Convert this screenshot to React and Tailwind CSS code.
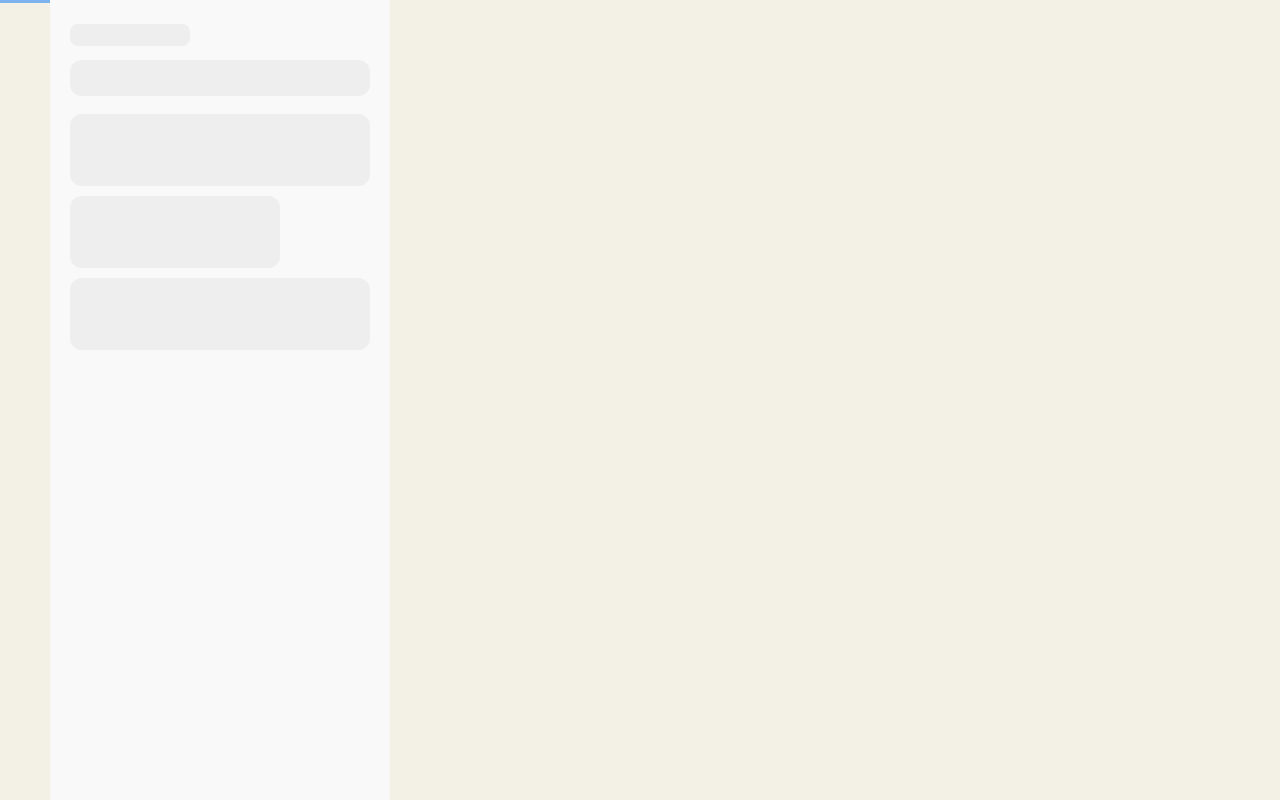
export default function App() {
  return (
    <div className="flex h-[800px] w-full bg-[#f3f1e6] font-['Liberation_Sans',sans-serif]">
      {/* Left rail */}
      <div className="relative w-[50px] shrink-0 bg-[#f3f1e6]">
        <div className="absolute left-0 top-0 h-[3px] w-[50px] bg-[#7cb2ee]" />
      </div>

      {/* Loading sidebar */}
      <aside className="flex w-[340px] shrink-0 flex-col bg-[#f9f9f9] px-5 pt-6">
        <div className="h-[22px] w-[120px] rounded-lg bg-[#eeeeee]" />
        <div className="mt-[14px] h-9 w-full rounded-xl bg-[#eeeeee]" />
        <div className="mt-[18px] h-[72px] w-full rounded-xl bg-[#eeeeee]" />
        <div className="mt-[10px] h-[72px] w-[210px] rounded-xl bg-[#eeeeee]" />
        <div className="mt-[10px] h-[72px] w-full rounded-xl bg-[#eeeeee]" />
      </aside>

      {/* Main area */}
      <main className="flex-1 bg-[#f3f1e6]" />
    </div>
  );
}
